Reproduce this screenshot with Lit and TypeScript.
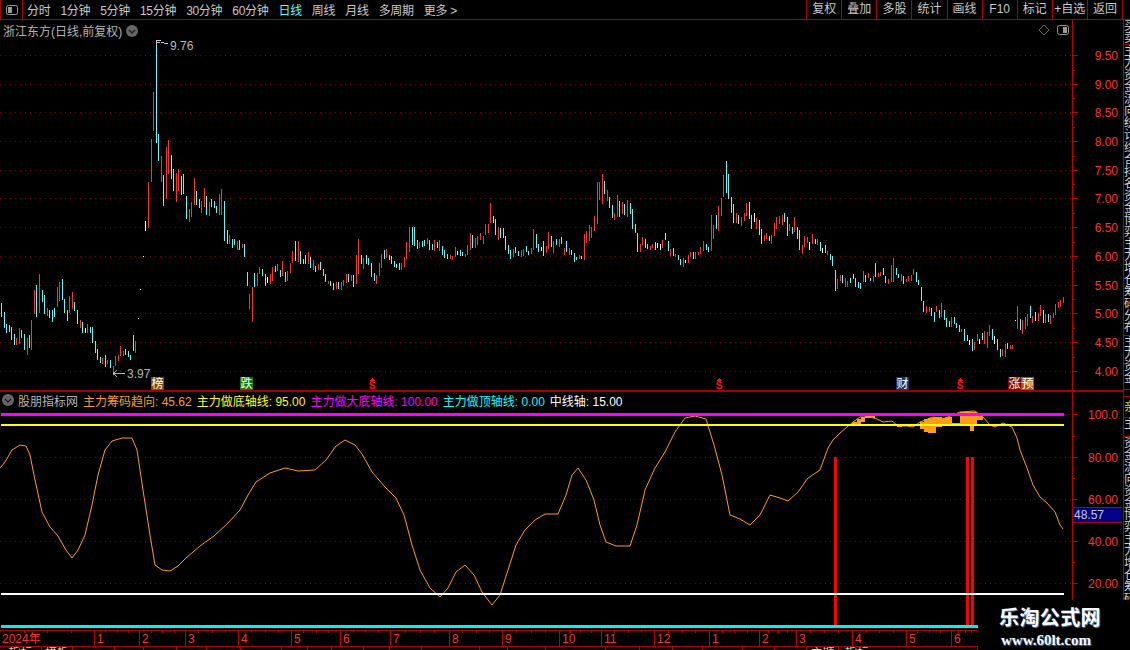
import { LitElement, html, svg, css } from 'lit';
import { customElement } from 'lit/decorators.js';

// candle data read off 3x crops: ox/oy is the crop origin, each bar is colour,x,top,bottom in crop pixels
const CANDLES = [
  { ox: 0, oy: 250, d: `c3,160,200 c13,185,233 c18,222,248 c28,226,245 c33,232,270 c42,252,285 r49,264,285 r57,235,282 c64,240,265 c73,252,300 r80,265,315 c88,255,294 r94,210,300 r103,120,192 c109,105,200 r118,72,190 c127,120,155 c133,135,192 r142,175,198 c148,180,204 c157,180,215 c163,175,200 r172,110,170 r178,97,152 c187,87,150 c193,148,190 c202,180,212 r208,138,190 r217,126,178 c223,156,182 c232,180,222 r241,210,234 c247,216,250 w256,235,248 r262,222,248 c271,232,250 c277,232,278 c286,274,308 c292,298,330 c301,322,340 r307,324,342 c316,316,350 r322,330,342 c331,330,354 r340,348,365 r346,318,348 r355,316,332 r361,288,318 r370,304,318 c376,297,315 c385,304,320 c391,316,330 c400,256,303 r406,274,308 w415,204,207 w421,117,120 w430,17,20 c742,66,108 r748,132,177 r757,110,216 c763,68,112 r772,68,108 r778,52,72 c787,57,78 c796,72,108 w802,80,100 r811,72,102 r817,52,94 c826,48,66 r832,42,64 c841,60,80 r847,33,78 c856,66,96 r862,64,94 r871,40,70 r877,3,40 c886,-27,34 r895,-27,36` },
  { ox: 100, oy: 30, d: `w136,573,603 r145,456,594 r154,327,456 r160,186,303 c169,30,340 c175,312,393 r184,378,456 c190,435,528 r199,351,507 r205,330,432 c214,375,447 c220,417,483 r229,429,516 r235,417,483 c244,438,495 c250,432,492 c259,498,567 r268,537,576 r274,516,561 r283,444,525 c289,483,525 c298,507,534 r304,513,549 r313,474,531 c319,498,555 r328,516,558 c334,507,531 c343,513,534 c349,528,549 r358,492,555 r364,477,555 c373,513,633 c382,600,642 r388,615,642 c397,627,654 c403,627,645 r412,633,660 c418,630,660 r427,642,655 c433,642,680` },
  { ox: 300, oy: 160, d: `c0,273,312 c9,297,312 c15,285,312 r24,276,312 c30,291,324 r39,300,330 c45,318,336 r54,312,330 c60,306,330 c69,327,348 c75,342,366 r84,363,372 c90,363,378 c99,369,390 r108,366,387 c114,366,387 r123,366,390 r129,360,378 r138,342,369 c144,342,366 r153,345,363 c159,345,381 r168,285,372 r174,237,342 c183,285,312 r189,294,327 c198,285,312 c204,294,315 c213,309,351 c222,339,363 r228,345,372 r237,309,348 r243,282,324 c252,270,297 r258,267,294 c267,285,300 c273,288,312 c282,303,321 c288,312,324 c297,309,330 r303,309,330 r312,291,321 r318,246,297 r327,201,276 c336,201,255 c342,201,258 c351,240,267 r357,246,264 c366,243,261 c372,240,258 r381,234,252 c387,240,270 c396,252,270 r402,240,273 c411,246,264 r417,240,273 c426,258,285 c432,270,294 c441,282,297 r450,285,297 r456,288,300 r465,261,291 w471,273,285 c480,270,288 c486,276,288 r495,282,291 r501,255,285 r510,219,270 c516,225,264 r525,234,264 r531,228,255 r540,219,240 r549,228,252 r555,192,225 r564,192,219 r570,129,189 c579,168,189 c585,177,225 r594,201,240 c600,204,234 c609,204,234 c615,228,270 c624,255,282 c630,270,297 r639,267,291 c645,261,279 c654,273,288 r663,270,291 r669,267,288 c678,258,276 c684,273,285 r693,264,282 r699,207,270 c708,222,264 c714,252,276 w723,261,273 c729,243,288 r738,258,279 r744,216,267 c753,228,261 r759,243,279 c768,237,255 r777,237,261 c783,231,252 r792,264,285 c798,243,276 r807,264,285 c813,270,285 c822,279,306 c828,291,300 r837,285,297 c843,288,297 r852,222,300 r858,213,249 r867,195,243 r873,201,234 r882,168,213 r891,66,192 r897,66,120 r906,42,132 c912,63,102 r921,90,123 c927,111,144 c936,135,174 r942,159,180 r951,105,171 c957,123,171 r966,126,162 c972,132,165 r981,120,171 c990,129,162 c996,147,207 c1005,192,219 c1011,219,276 r1020,252,276 r1026,231,255 c1035,237,264 c1041,252,267 r1050,258,270 r1056,252,264 c1065,246,270 w1071,249,264 w1080,252,270 r1086,240,264 c1095,219,240 c1104,243,273 r1110,267,288 c1119,264,288 r1125,282,291 c1134,285,300 c1140,297,315 r1149,294,321 w1155,300,309 r1164,285,309 r1170,276,291 c1179,276,297 r1185,276,297 r1194,276,285` },
  { ox: 690, oy: 150, d: `r30,291,312 r39,273,303 c48,282,300 c54,291,306 r63,195,303 r69,225,267 c78,195,237 r84,168,243 r93,144,198 r99,75,141 c108,33,129 c114,72,147 c123,141,189 c129,162,219 r138,189,219 c144,195,222 r153,201,228 r162,189,213 r168,159,198 c177,156,207 c183,195,237 w192,189,216 r198,204,237 c207,210,255 c213,237,282 r222,255,273 r228,249,267 c237,258,273 r243,255,282 r252,219,258 r258,201,237 r267,198,222 r276,195,225 c282,189,216 c291,201,258 r297,222,243 c306,231,252 r312,201,246 c321,231,267 c327,240,300 r336,285,312 r342,258,291 r351,261,279 w357,276,300 r366,252,282 c375,267,282 r381,267,285 c390,276,303 w396,294,309 c405,285,309 r411,303,315 c420,312,330 c426,318,348 c435,360,423 r441,387,417 r450,375,393 c456,375,399 r465,384,411 r471,393,411 c480,384,399 c489,372,387 c495,384,411 c504,396,414 c510,399,417 r519,363,396 c525,375,396 r534,369,384 c540,384,393 r549,378,396 c556,339,381 r564,369,381 r570,366,378 c579,354,375 c585,378,399 r594,387,402 r603,345,396 r609,324,396 c618,354,375 c624,372,384 r633,372,393 c639,378,402 r648,387,396 r654,378,393 r663,375,393 r669,357,375 c678,366,396 c684,390,405 c693,411,453 c699,453,486 r708,468,489 r717,471,486 c723,474,498 c732,486,516 r738,468,486 c747,480,504 r753,459,501 c762,480,510 c768,504,531 c777,513,531 r783,501,531 c792,501,522 c798,519,534 c807,525,546 r813,537,546 c822,537,573 c831,555,573 w837,570,585 c846,567,603 r852,576,600 r861,552,573 w867,567,582 c876,549,570 r882,543,582 r891,546,594 r897,525,558 c906,537,570 w912,558,582 c921,567,600 c930,597,621 r936,597,618 r945,582,621 c951,579,597 r960,585,597 r966,585,597 w975,509,512 r981,468,537 c990,507,540 r996,510,552 r1005,501,537 r1011,492,528 c1020,468,504 r1026,498,519 c1035,486,513 r1044,489,513 r1050,465,498 c1059,480,519 r1065,492,519 c1074,492,516 r1080,495,522 r1089,489,504 r1095,462,495 r1104,456,474 r1110,450,471 r1119,441,459` },
];

const COLORS: Record<string, string> = { c: '#55ffff', r: '#ff3232', w: '#ffffff' };

const bars = CANDLES.flatMap(({ ox, oy, d }) =>
  d.split(' ').map((b) => {
    const [x, top, bot] = b.slice(1).split(',').map(Number);
    const y = Math.round(oy + top / 3);
    return { x: Math.round(ox + x / 3), y, h: Math.max(1, Math.round(oy + bot / 3) - y), fill: COLORS[b[0]] };
  })
);

const PRICE_GRID = [55, 84, 112, 141, 170, 198, 227, 256, 285, 313, 342, 371];
const PRICE_LABELS = ['9.50', '9.00', '8.50', '8.00', '7.50', '7.00', '6.50', '6.00', '5.50', '5.00', '4.50', '4.00'];
const IND_GRID = [
  { y: 414, label: '100.0' },
  { y: 457, label: '80.00' },
  { y: 499, label: '60.00' },
  { y: 541, label: '40.00' },
  { y: 583, label: '20.00' },
];

const CURVE = `0,468 5,462 12,450 20,445 26,446 30,455 35,480 42,512 50,527 58,536 66,550 72,558 78,550 85,535 92,505 98,475 105,450 112,441 122,438 132,438 137,450 143,490 150,535 155,565 162,570 170,571 178,566 186,558 200,546 214,536 228,523 240,510 248,495 256,482 270,473 285,468 298,471 315,470 326,460 336,446 345,440 355,445 362,454 372,472 385,487 396,498 404,515 412,545 420,570 430,588 440,597 448,588 456,572 465,565 474,575 482,592 492,605 500,595 508,570 516,545 525,530 535,520 545,514 558,514 566,495 572,475 578,468 586,480 594,500 600,525 606,542 616,546 630,546 637,525 645,490 655,468 665,452 675,432 685,418 695,416 706,419 714,445 722,475 730,515 740,519 750,525 760,515 770,495 780,498 788,501 798,492 808,478 820,470 828,448 833,440 840,433 847,427 853,422 860,417 870,417 877,419 883,422 892,421 898,426 907,426 913,427 920,422 933,417 943,419 960,412 975,411 983,417 990,425 995,427 1003,423 1012,427 1017,438 1020,450 1027,468 1033,485 1040,497 1047,503 1055,512 1060,525 1063,529`;

// orange blocks above the 95 line, from the 3x crop at (820,370): x0,x1,top,bottom
const BLOCKS = [
  [95, 110, 155, 164], [110, 122, 148, 164], [122, 135, 140, 155], [135, 165, 137, 145], [230, 245, 165, 171],
  [300, 312, 155, 178], [312, 325, 148, 185], [325, 340, 143, 188], [340, 348, 140, 190], [348, 365, 142, 170],
  [365, 375, 145, 162], [375, 395, 140, 165], [395, 420, 160, 165], [420, 450, 125, 165], [450, 462, 125, 182],
  [462, 470, 127, 165], [470, 490, 137, 150],
];

const DATE_MARKS = [
  [94, '1'], [139, '2'], [185, '3'], [238, '4'], [291, '5'], [340, '6'], [390, '7'], [449, '8'], [502, '9'],
  [559, '10'], [601, '11'], [654, '12'], [709, '1'], [759, '2'], [796, '3'], [852, '4'], [906, '5'], [951, '6'],
] as [number, string][];

const TOOLS = ['分时', '1分钟', '5分钟', '15分钟', '30分钟', '60分钟', '日线', '周线', '月线', '多周期', '更多 >'];
const ACTIONS = ['复权', '叠加', '多股', '统计', '画线', 'F10', '标记', '+自选', '返回'];
const LEGEND = [
  ['主力筹码趋向: 45.62', 'orange'],
  ['主力做底轴线: 95.00', 'yellow'],
  ['主力做大底轴线: 100.00', 'magenta'],
  ['主力做顶轴线: 0.00', 'cyan'],
  ['中线轴: 15.00', 'white'],
];
const TAGS = [
  { x: 151, w: 13, fill: '#7a4a12', text: '榜' },
  { x: 240, w: 13, fill: '#0b7a0b', text: '跌' },
  { x: 896, w: 13, fill: '#0c3b6e', text: '财' },
  { x: 1008, w: 13, fill: '#7c0a0a', text: '涨' },
  { x: 1021, w: 13, fill: '#a64e14', text: '预' },
];
const SIGNALS = [372, 719, 960];
// the bottom tab row is almost cut off by the window, only a few tabs show any ink
const TABS: { w: number; text?: string; cls?: string }[] = [
  { w: 42, text: '指标' }, { w: 31, text: '模板' }, { w: 42 }, { w: 29 }, { w: 33 }, { w: 30 }, { w: 34 }, { w: 41 },
  { w: 26 }, { w: 24 }, { w: 32 }, { w: 26 }, { w: 32 }, { w: 58 }, { w: 28 }, { w: 38 }, { w: 60 }, { w: 34 },
  { w: 33 }, { w: 30 }, { w: 40 }, { w: 32 }, { w: 32 }, { w: 32, text: '主题' }, { w: 139, text: '指标', cls: 'on' },
];

const SIDE_TOP = [
  { h: 25, text: '买卖' },
  { h: 97, text: '主力资金流向统计' },
  { h: 194, text: '综合排名资金博弈主力增仓筹码分布' },
  { h: 54, text: '主力资金' },
];
const SIDE_BOTTOM = [
  { h: 5, text: '' },
  { h: 21, text: '亲', cls: 'on' },
  { h: 19, text: '主' },
  { h: 193, text: '资金流向资金博弈主力增仓筹码分布' },
];

@customElement('app-root')
export class AppRoot extends LitElement {
  static styles = css`
    :host {
      display: block;
      width: 1130px;
      height: 650px;
      background: #000;
      font-family: 'Liberation Sans', 'Noto Sans CJK SC', sans-serif;
      font-size: 12px;
      color: #c8c8c8;
    }
    .app {
      position: relative;
      width: 1130px;
      height: 650px;
      overflow: hidden;
      background: #000;
      display: grid;
      grid-template-rows: 20px 372px 238px 17px 3px;
    }
    .toolbar {
      display: flex;
      align-items: center;
      justify-content: space-between;
      border-bottom: 1px solid #b00000;
      box-sizing: border-box;
    }
    .tools {
      display: flex;
      align-items: center;
      gap: 10px;
      letter-spacing: -0.3px;
    }
    .panel-btn {
      width: 23px;
      height: 19px;
      display: flex;
      align-items: center;
      justify-content: center;
      border-left: 1px solid #b00000;
      border-right: 1px solid #b00000;
      box-sizing: border-box;
      margin-right: -6px;
    }
    .active {
      color: #55ffff;
    }
    .actions {
      display: flex;
      border-left: 1px solid #b00000;
      margin-right: 7px;
    }
    .action {
      width: 34.1px;
      height: 19px;
      line-height: 18px;
      text-align: center;
      border-right: 1px solid #b00000;
      white-space: nowrap;
    }
    .pane {
      position: relative;
      display: grid;
      grid-template-columns: 1072px 51px 7px;
    }
    .pane.price {
      grid-template-rows: 370px 2px;
    }
    .divider {
      grid-column: 1 / 3;
      background: #a00000;
    }
    .plot {
      display: block;
    }
    .axis {
      display: block;
    }
    .side {
      display: flex;
      flex-direction: column;
      border-left: 1px solid #b00000;
      overflow: hidden;
      box-sizing: border-box;
      width: 7px;
    }
    .pane.price .side {
      grid-column: 3;
      grid-row: 1 / 3;
    }
    .side div {
      width: 12px;
      line-height: 12px;
      border-bottom: 1px solid #b00000;
      box-sizing: border-box;
      flex: none;
      overflow: hidden;
      color: #d0d0d0;
    }
    .side div.on {
      color: #e0e000;
      line-height: 20px;
    }
    .title {
      position: absolute;
      left: 3px;
      top: 2px;
      display: flex;
      align-items: center;
      gap: 4px;
      color: #b4b4b4;
    }
    .legend {
      position: absolute;
      left: 2px;
      top: 0;
      display: flex;
      align-items: center;
      gap: 5px;
      height: 16px;
      white-space: nowrap;
    }
    .legend .name {
      color: #b4b4b4;
      margin-left: -1px;
    }
    .legend .orange { color: #ff9c1a; }
    .legend .yellow { color: #ffff00; }
    .legend .magenta { color: #ff00ff; }
    .legend .cyan { color: #00ffff; }
    .legend .white { color: #ffffff; }
    .corner {
      position: absolute;
      left: 1038px;
      top: 4px;
      display: flex;
      align-items: center;
      gap: 7px;
    }
    .value-box {
      position: absolute;
      left: 1073px;
      top: 115px;
      width: 49px;
      height: 16px;
      background: #000088;
      border-top: 1px solid #b00000;
      border-bottom: 1px solid #b00000;
      line-height: 15px;
      color: #c8c8c8;
      padding-left: 1px;
      box-sizing: border-box;
    }
    .dates {
      display: block;
      border-top: 1px solid #b00000;
      border-bottom: 1px solid #b00000;
      box-sizing: border-box;
      width: 978px;
      height: 17px;
    }
    .tabs {
      display: flex;
      width: 978px;
      overflow: hidden;
    }
    .tab {
      flex: none;
      height: 3px;
      border-right: 1px solid #b00000;
      box-sizing: border-box;
      overflow: hidden;
      line-height: 12px;
      text-align: center;
      color: #d0d0d0;
      white-space: nowrap;
    }
    .tab.on {
      color: #55ffff;
      text-align: left;
      padding-left: 6px;
    }
    .watermark {
      position: absolute;
      left: 978px;
      top: 600px;
      width: 152px;
      height: 50px;
      background: #000;
      display: flex;
      flex-direction: column;
      align-items: flex-start;
      padding: 5px 0 0 21px;
      box-sizing: border-box;
    }
    .wm-cn {
      font-family: 'Liberation Serif', 'Noto Sans CJK SC', serif;
      font-weight: 700;
      font-size: 20px;
      line-height: 26px;
      letter-spacing: 0.4px;
      color: #fff;
      text-shadow: 1px 1px 1px #5a7fa8;
    }
    .wm-url {
      font-family: 'Liberation Serif', serif;
      font-weight: 700;
      font-size: 15px;
      line-height: 18px;
      color: #f4f8ff;
      text-shadow: 1px 1px 1px #4a6fa0;
      margin-left: 2px;
    }
    svg text {
      font-family: 'Liberation Sans', 'Noto Sans CJK SC', sans-serif;
      font-size: 12px;
    }
    .grid-line {
      stroke: #8a0000;
      stroke-width: 1;
      stroke-dasharray: 1 4;
    }
    .axis-line {
      stroke: #c00000;
      stroke-width: 1;
    }
    .axis-text,
    .date-text {
      fill: #ff3232;
    }
    .note {
      fill: #b8b8b8;
    }
    svg text.tag-text {
      fill: #fff;
      font-size: 12px;
    }
    svg text.signal {
      fill: #ff1010;
      font-size: 10px;
      font-weight: 700;
    }
  `;

  private icon(flip = false) {
    return html`<svg width="12" height="10" viewBox="0 0 12 10">
      <rect x="0.5" y="0.5" width="11" height="9" rx="2" fill="none" stroke="#9a9a9a"></rect>
      <rect x=${flip ? 6 : 2} y="2" width="4" height="6" fill="#9a9a9a"></rect>
    </svg>`;
  }

  private chevron() {
    return html`<svg width="12" height="12" viewBox="0 0 12 12">
      <circle cx="6" cy="6" r="6" fill="#666"></circle>
      <path d="M3 5 L6 8 L9 5" fill="none" stroke="#222" stroke-width="1.4"></path>
    </svg>`;
  }

  private axisTicks(from: number, to: number, majors: number[]) {
    const minors = majors.slice(1).map((y, i) => Math.round((y + majors[i]) / 2));
    return svg`
      <line class="axis-line" x1="1072.5" x2="1072.5" y1=${from} y2=${to}></line>
      ${majors.map((y) => svg`<line class="axis-line" x1="1072" x2="1078" y1=${y + 0.5} y2=${y + 0.5}></line>`)}
      ${minors.map((y) => svg`<line class="axis-line" x1="1072" x2="1075" y1=${y + 0.5} y2=${y + 0.5}></line>`)}
    `;
  }

  private priceChart() {
    return html`<svg class="plot" width="1072" height="370" viewBox="0 20 1072 370" shape-rendering="crispEdges">
      ${PRICE_GRID.map((y) => svg`<line class="grid-line" x1="0" x2="1072" y1=${y + 0.5} y2=${y + 0.5}></line>`)}
      ${bars.map((b) => svg`<rect x=${b.x} y=${b.y} width="1" height=${b.h} fill=${b.fill}></rect>`)}
      <path d="M156.5 40 V45 M157 40.5 H161 M157 42.5 H160 M161 43 L163 42 L165 43.5 L168 44" fill="none" stroke="#c8c8c8"></path>
      <text class="note" x="170" y="50">9.76</text>
      <path d="M113 373.5 H125 M113 373.5 L117 370.5 M113 373.5 L117 376.5" fill="none" stroke="#b8b8b8"></path>
      <text class="note" x="127" y="378">3.97</text>
      ${TAGS.map((t) => svg`
        <rect x=${t.x} y="377" width=${t.w} height="13" fill=${t.fill}></rect>
        <text class="tag-text" x=${t.x + t.w / 2} y="388" text-anchor="middle">${t.text}</text>
      `)}
      ${SIGNALS.map((x) => svg`
        <path d=${`M${x - 3} 381 L${x} 378 L${x + 3} 381 Z`} fill="#ff1010"></path>
        <text class="signal" x=${x} y="389" text-anchor="middle">S</text>
      `)}
    </svg>`;
  }

  private priceAxis() {
    return html`<svg class="axis" width="51" height="370" viewBox="1072 20 51 370">
      ${this.axisTicks(20, 390, PRICE_GRID)}
      ${PRICE_LABELS.map((l, i) => svg`<text class="axis-text" x="1118" y=${PRICE_GRID[i] + 5} text-anchor="end">${l}</text>`)}
    </svg>`;
  }

  private indicatorChart() {
    return html`<svg class="plot" width="1072" height="238" viewBox="0 392 1072 238">
      <g shape-rendering="crispEdges">
        ${IND_GRID.slice(1).map((g) => svg`<line class="grid-line" x1="0" x2="1072" y1=${g.y + 0.5} y2=${g.y + 0.5}></line>`)}
        <line class="grid-line" x1="1064" x2="1072" y1="414.5" y2="414.5"></line>
        <rect x="834" y="457" width="3" height="168" fill="#ff0000"></rect>
        <rect x="966" y="457" width="3" height="168" fill="#ff0000"></rect>
        <rect x="971" y="457" width="3" height="168" fill="#ff0000"></rect>
      </g>
      <polyline points=${CURVE} fill="none" stroke="#ff9c1a" stroke-width="1"></polyline>
      <g shape-rendering="crispEdges">
        ${BLOCKS.map(([x0, x1, t, b]) => svg`<rect x=${820 + x0 / 3} y=${370 + t / 3} width=${(x1 - x0) / 3} height=${(b - t) / 3} fill="#ff9c1a"></rect>`)}
        <rect x="1" y="413" width="1063" height="3" fill="#ff00ff"></rect>
        <rect x="1" y="424" width="1063" height="2" fill="#ffff00"></rect>
        <rect x="1" y="593" width="1063" height="2" fill="#ffffff"></rect>
        <rect x="1" y="625" width="977" height="3" fill="#00f0f0"></rect>
      </g>
    </svg>`;
  }

  private indicatorAxis() {
    return html`<svg class="axis" width="51" height="238" viewBox="1072 392 51 238" shape-rendering="crispEdges">
      ${this.axisTicks(392, 600, IND_GRID.map((g) => g.y))}
      ${IND_GRID.map((g) => svg`<text class="axis-text" x="1118" y=${g.y + 5} text-anchor="end">${g.label}</text>`)}
    </svg>`;
  }

  private dateAxis() {
    const seps = [0, ...DATE_MARKS.map((m) => m[0]), 978];
    const ticks = seps.slice(1).flatMap((x, i) => [1, 2, 3].map((k) => Math.round(seps[i] + ((x - seps[i]) * k) / 4)));
    return html`<svg class="dates" viewBox="0 0 978 15" shape-rendering="crispEdges">
      ${ticks.map((x) => svg`<line class="axis-line" x1=${x + 0.5} x2=${x + 0.5} y1="0" y2="2"></line>`)}
      ${DATE_MARKS.map(([x]) => svg`<line class="axis-line" x1=${x + 0.5} x2=${x + 0.5} y1="0" y2="15"></line>`)}
      <text class="date-text" x="2" y="12">2024年</text>
      ${DATE_MARKS.map(([x, l]) => svg`<text class="date-text" x=${x + 3} y="12">${l}</text>`)}
    </svg>`;
  }

  private sideStrip(groups: { h: number; text: string; cls?: string }[]) {
    return html`<div class="side">
      ${groups.map((g) => html`<div class=${g.cls ?? ''} style="height:${g.h}px">${g.text}</div>`)}
    </div>`;
  }

  render() {
    return html`<div class="app">
      <div class="toolbar">
        <div class="tools">
          <div class="panel-btn">${this.icon()}</div>
          ${TOOLS.map((t) => html`<span class=${t === '日线' ? 'active' : ''}>${t}</span>`)}
        </div>
        <div class="actions">
          ${ACTIONS.map((a) => html`<div class="action">${a}</div>`)}
        </div>
      </div>

      <div class="pane price">
        ${this.priceChart()} ${this.priceAxis()} ${this.sideStrip(SIDE_TOP)}
        <div class="divider"></div>
        <div class="title">
          <span>浙江东方(日线,前复权)</span>
          ${this.chevron()}
        </div>
        <div class="corner">
          <svg width="12" height="12" viewBox="0 0 12 12"><path d="M6 1 L11 6 L6 11 L1 6 Z" fill="none" stroke="#666"></path></svg>
          ${this.icon(true)}
        </div>
      </div>

      <div class="pane">
        ${this.indicatorChart()} ${this.indicatorAxis()} ${this.sideStrip(SIDE_BOTTOM)}
        <div class="legend">
          ${this.chevron()}
          <span class="name">股朋指标网</span>
          ${LEGEND.map(([text, cls]) => html`<span class=${cls}>${text}</span>`)}
        </div>
        <div class="value-box">48.57</div>
      </div>

      ${this.dateAxis()}
      <div class="tabs">
        ${TABS.map((t) => html`<div class="tab ${t.cls ?? ''}" style="width:${t.w}px">${t.text ?? ''}</div>`)}
      </div>

      <div class="watermark">
        <div class="wm-cn">乐淘公式网</div>
        <div class="wm-url">www.60lt.com</div>
      </div>
    </div>`;
  }
}
